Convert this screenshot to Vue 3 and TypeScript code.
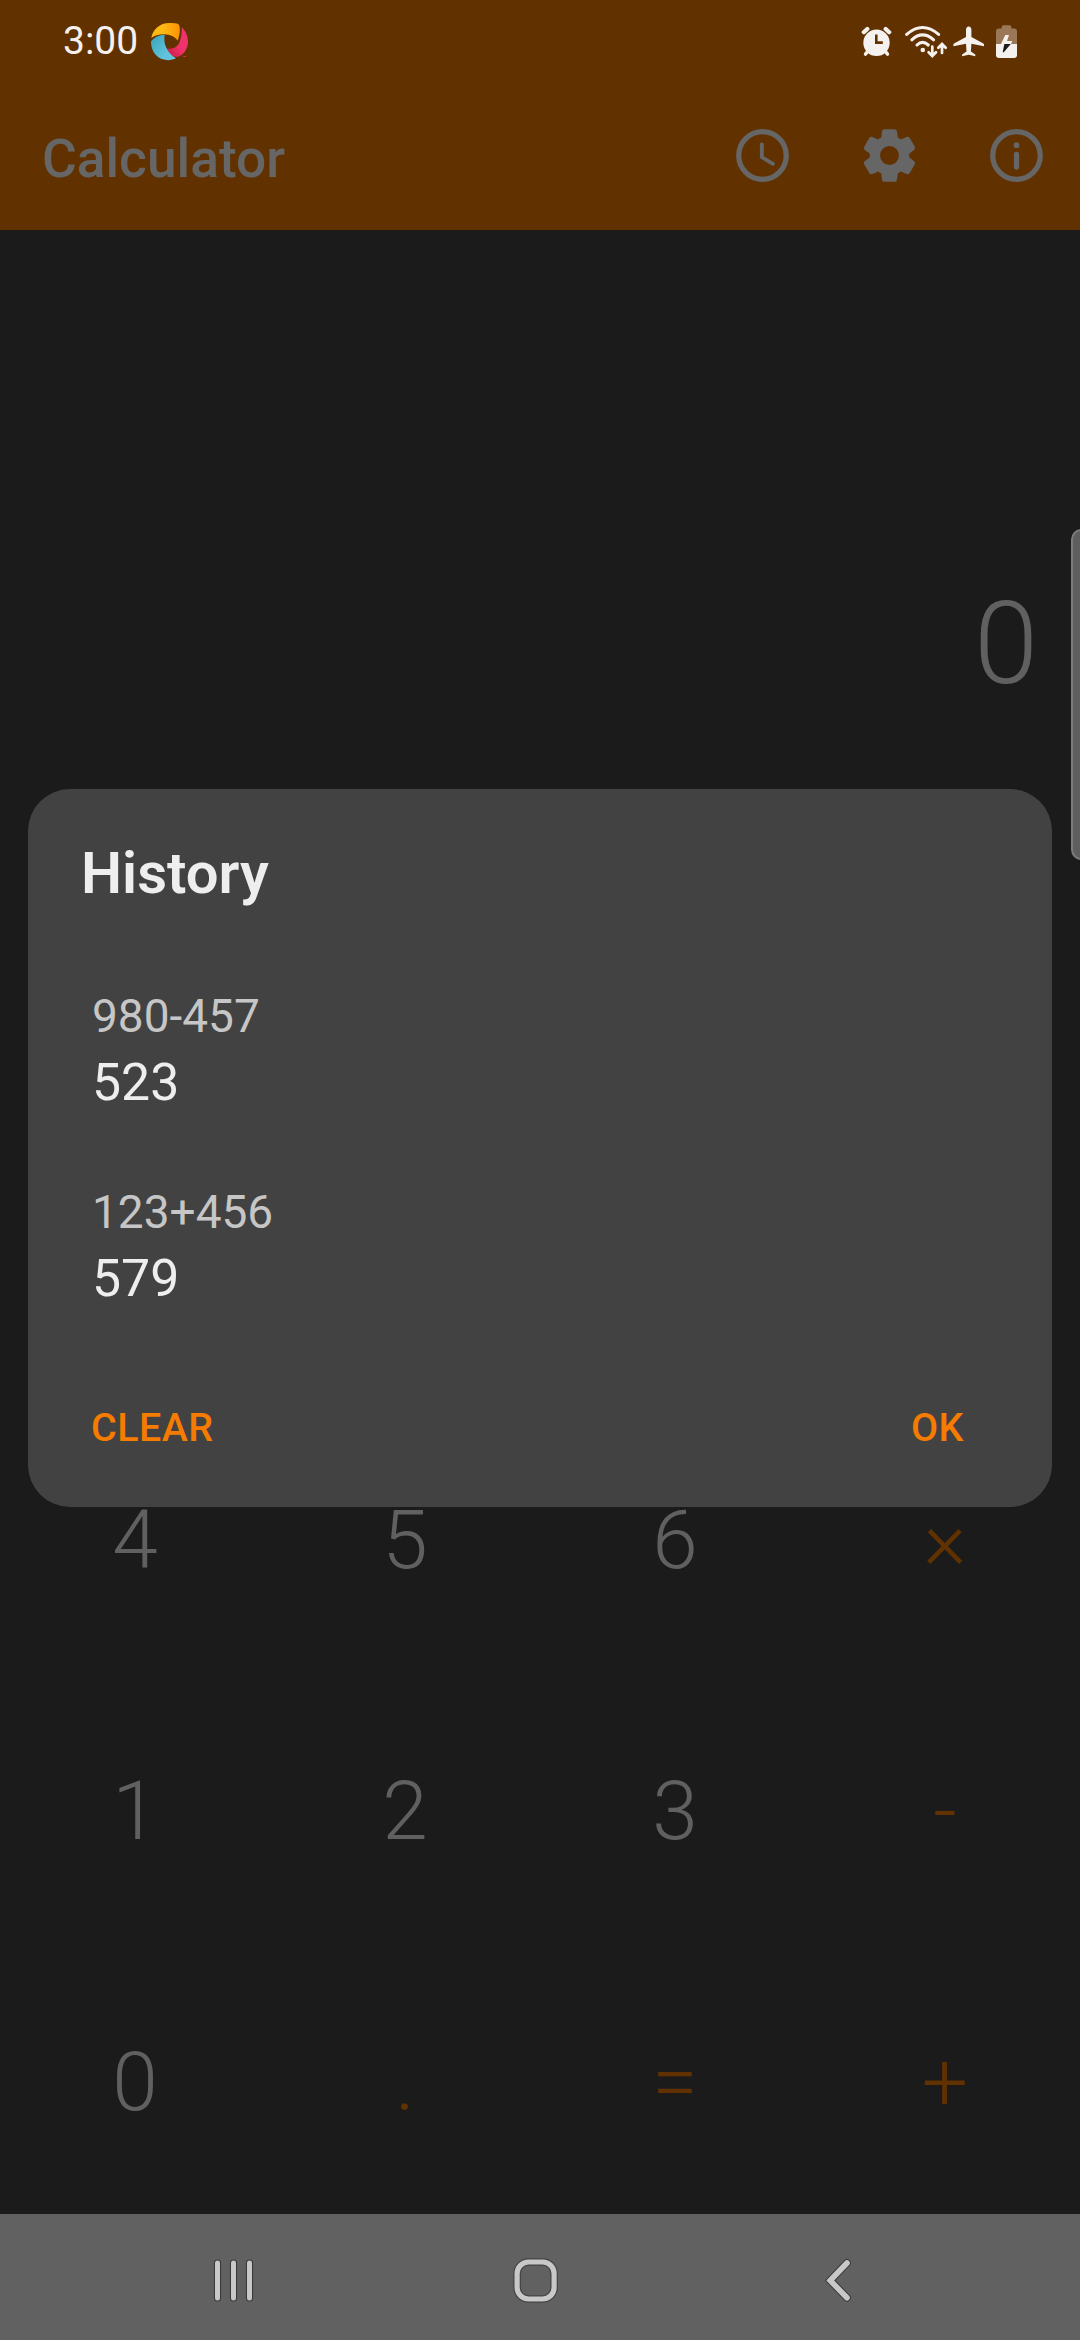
<script setup lang="ts">
interface Key {
  label: string
  accent?: boolean
}

interface HistoryEntry {
  expression: string
  result: string
}

const display = '0'

const keys: Key[] = [
  { label: '4' },
  { label: '5' },
  { label: '6' },
  { label: '×', accent: true },
  { label: '1' },
  { label: '2' },
  { label: '3' },
  { label: '-', accent: true },
  { label: '0' },
  { label: '.', accent: true },
  { label: '=', accent: true },
  { label: '+', accent: true },
]

const history: HistoryEntry[] = [
  { expression: '980-457', result: '523' },
  { expression: '123+456', result: '579' },
]
</script>

<template>
  <div class="screen">
    <header class="top">
      <div class="status">
        <span class="time">3:00</span>
        <svg class="logo" viewBox="330 66 120 120" width="40" height="40">
          <defs>
            <linearGradient id="warm" x1="0" x2="1">
              <stop offset="0.4" stop-color="#fdb913" />
              <stop offset="1" stop-color="#fb9205" />
            </linearGradient>
            <linearGradient id="pink" x1="0" y1="1" x2="0.8" y2="0.2">
              <stop offset="0" stop-color="#c4123f" />
              <stop offset="0.6" stop-color="#f0326b" />
            </linearGradient>
            <linearGradient id="sky" x1="0" x2="1" y2="1">
              <stop offset="0.2" stop-color="#43adc6" />
              <stop offset="0.7" stop-color="#62c4dc" />
            </linearGradient>
          </defs>
          <path fill="url(#warm)" d="M334 114C338 88 360 69 388 69Q402 68 414 71C422 78 421 100 413 122C406 110 390 104 372 103C356 103 344 107 334 114Z" />
          <path fill="url(#pink)" d="M425 82C438 93 445 112 444 130C441 152 428 167 412 171C397 170 384 160 377 146C396 148 411 143 418 128C424 115 426 98 425 82Z" />
          <path fill="url(#sky)" d="M374 104C370 128 377 155 408 175C398 181 380 182 368 178C346 171 333 150 333 124C343 111 358 105 374 104Z" />
          <path fill="#e0204f" d="M430 168h8v3h-8z" />
        </svg>
        <div class="status-icons">
          <svg viewBox="861 26 31 32" width="31" height="32">
            <g stroke="#f5f1ee" stroke-linecap="round" fill="none">
              <path stroke-width="4.2" d="M863.8 32.2L867.3 29M889.2 32.2L885.7 29" />
              <path stroke-width="3.6" d="M868 51l-2.4 3M885 51l2.4 3" />
            </g>
            <circle cx="876.5" cy="42.8" r="13.2" fill="#f5f1ee" />
            <path d="M876.3 34.5V42.6H882.8" fill="none" stroke="#613200" stroke-width="2.6" />
          </svg>
          <svg viewBox="904 24 44 35" width="44" height="35">
            <g stroke="#f5f1ee" fill="none" stroke-linecap="round" stroke-width="3.1">
              <path d="M906.7 34.4Q922.5 20.6 938.6 34.4" />
              <path d="M911.8 39.8Q922.5 30 933.6 39.8" />
              <path d="M917 45Q922.5 39.6 928.3 45" />
              <path stroke-width="2.7" d="M932.3 46.5V55M928.6 52.3L932.3 56L936 52.3M942 53V44.5M938.3 47.7L942 44L945.7 47.7" />
            </g>
            <circle cx="922.8" cy="50" r="2.3" fill="#f5f1ee" />
          </svg>
          <svg viewBox="953 26 32 31" width="32" height="31">
            <path fill="#f5f1ee" d="M968.7 26.6C970.4 26.6 971.4 28 971.4 30V37L983.4 43.6Q984.4 44.4 984 46.3L971.4 43.8L970.9 51.4L975.3 54.6V56.3L968.7 54.7L962.1 56.3V54.6L966.5 51.4L966 43.8L953.4 46.3Q953 44.4 954 43.6L966 37V30C966 28 967 26.6 968.7 26.6Z" />
          </svg>
          <svg viewBox="996 25 21 33" width="21" height="33">
            <path fill="#997757" d="M1001.7 28V27Q1001.7 25.3 1003.4 25.3H1009.7Q1011.3 25.3 1011.3 27V28.6H1014Q1017 28.6 1017 31.6V44H996V31.6Q996 28.6 999 28.6H1001.7Z" />
            <path fill="#f5f1ee" d="M996 44H1017V55Q1017 58 1014 58H999Q996 58 996 55Z" />
            <path fill="#f5f1ee" d="M1005.3 35H1009L1007 41H1012.3L1011 44H1001Z" />
            <path fill="#1b1b1b" d="M1004.3 44H1010.8L1003.8 52.3H1002.7Z" />
          </svg>
        </div>
      </div>
      <div class="toolbar">
        <h1 class="title">Calculator</h1>
        <nav class="actions">
          <svg viewBox="0 0 24 24" width="63" height="63">
            <circle cx="12" cy="12" r="9.05" fill="none" stroke="#666" stroke-width="2" />
            <path fill="#666" d="M11.78 7h-.06c-.4 0-.72.32-.72.72v4.72c0 .35.18.68.49.86l4.15 2.49c.34.2.78.1.98-.24.21-.34.1-.79-.25-.99l-3.87-2.3V7.72c0-.4-.32-.72-.72-.72z" />
          </svg>
          <svg viewBox="0 0 24 24" width="63" height="63">
            <path fill="#666" fill-rule="evenodd" d="M19.5 12c0-.23-.01-.45-.03-.68l1.86-1.41c.4-.3.51-.86.26-1.3l-1.87-3.23c-.25-.44-.79-.62-1.25-.42l-2.15.91c-.37-.26-.76-.49-1.17-.68l-.29-2.31C14.8 2.38 14.37 2 13.87 2h-3.73C9.63 2 9.2 2.38 9.14 2.88L8.85 5.19c-.41.19-.8.42-1.17.68L5.53 4.96c-.46-.2-1-.02-1.25.42L2.41 8.62c-.25.44-.14.99.26 1.3l1.86 1.41C4.51 11.55 4.5 11.77 4.5 12s.01.45.03.68l-1.86 1.41c-.4.3-.51.86-.26 1.3l1.87 3.23c.25.44.79.62 1.25.42l2.15-.91c.37.26.76.49 1.17.68l.29 2.31C9.2 21.62 9.63 22 10.13 22h3.73c.5 0 .93-.38.99-.88l.29-2.31c.41-.19.8-.42 1.17-.68l2.15.91c.46.2 1 .02 1.25-.42l1.87-3.23c.25-.44.14-.99-.26-1.3l-1.86-1.41c.03-.23.04-.45.04-.68zM12 15.6a3.6 3.6 0 1 1 0-7.2 3.6 3.6 0 0 1 0 7.2z" />
          </svg>
          <svg viewBox="0 0 24 24" width="63" height="63">
            <circle cx="12" cy="12" r="9.05" fill="none" stroke="#666" stroke-width="2" />
            <circle cx="12" cy="8.05" r="1.08" fill="#666" />
            <rect x="11" y="10.6" width="2" height="6.8" rx=".9" fill="#666" />
          </svg>
        </nav>
      </div>
    </header>

    <main class="body">
      <div class="display">{{ display }}</div>
      <div class="keypad">
        <button v-for="key in keys" :key="key.label" class="key" :class="{ accent: key.accent }">
          {{ key.label }}
        </button>
      </div>
    </main>

    <footer class="navbar">
      <svg viewBox="210 2254 48 54" width="48" height="54">
        <g fill="none" stroke-linecap="round">
          <path stroke="#3a3a3a" stroke-width="7.2" d="M217.5 2263V2298M233.5 2263V2298M249.5 2263V2298" />
          <path stroke="#c8c8c8" stroke-width="5" d="M217.5 2263V2298M233.5 2263V2298M249.5 2263V2298" />
        </g>
      </svg>
      <svg viewBox="508 2254 54 54" width="54" height="54">
        <rect x="517.1" y="2262" width="37" height="37" rx="11.5" fill="none" stroke="#444" stroke-width="7.6" />
        <rect x="517.1" y="2262" width="37" height="37" rx="11.5" fill="none" stroke="#c8c8c8" stroke-width="5.2" />
      </svg>
      <svg viewBox="820 2254 36 54" width="36" height="54">
        <path fill="none" stroke="#3e3e3e" stroke-width="7.8" stroke-linecap="round" d="M847 2263L830.2 2280.5L847 2297.8" />
        <path fill="none" stroke="#c8c8c8" stroke-width="5.6" stroke-linecap="round" d="M847 2263L830.2 2280.5L847 2297.8" />
      </svg>
    </footer>

    <div class="edge-handle"></div>

    <div class="overlay">
      <section class="dialog">
        <h2 class="dialog-title">History</h2>
        <ul class="entries">
          <li v-for="entry in history" :key="entry.expression">
            <div class="expression">{{ entry.expression }}</div>
            <div class="result">{{ entry.result }}</div>
          </li>
        </ul>
        <div class="dialog-actions">
          <button>CLEAR</button>
          <button>OK</button>
        </div>
      </section>
    </div>
  </div>
</template>

<style>
body {
  margin: 0;
  background: #1b1b1b;
}
</style>

<style scoped>
.screen {
  position: relative;
  display: flex;
  flex-direction: column;
  width: 1080px;
  height: 2340px;
  overflow: hidden;
  background: #1b1b1b;
  font-family: Roboto, sans-serif;
}

svg {
  display: block;
  flex: none;
}

button {
  padding: 0;
  border: 0;
  background: none;
  font-family: inherit;
}

.top {
  flex: none;
  height: 230px;
  background: #613200;
}

.status {
  display: flex;
  height: 80px;
  box-sizing: border-box;
  padding: 0 63px 0 63px;
}

.time {
  width: 87px;
  padding-top: 17px;
  font-size: 39px;
  line-height: 48px;
  color: #f5f1ee;
}

.logo {
  margin-top: 22px;
}

.status-icons {
  display: flex;
  align-items: flex-start;
  margin-left: auto;
  gap: 11px;
}

.status-icons svg:nth-child(1) {
  margin: 26px 1px 0 0;
}

.status-icons svg:nth-child(2) {
  margin: 24px -6px 0 0;
}

.status-icons svg:nth-child(3) {
  margin-top: 26px;
}

.status-icons svg:nth-child(4) {
  margin-top: 25px;
}

.toolbar {
  display: flex;
  justify-content: space-between;
  padding: 44px 32px 0 42px;
}

.title {
  margin: 3px 0 0;
  font-size: 53.3px;
  font-weight: 500;
  line-height: 64px;
  color: #666;
}

.actions {
  display: flex;
  gap: 64px;
}

.body {
  display: flex;
  flex: 1;
  flex-direction: column;
}

.display {
  flex: 1;
  padding: 344px 42px 0 0;
  font-size: 115.5px;
  font-weight: 300;
  line-height: 140px;
  text-align: right;
  color: #606060;
}

.keypad {
  display: grid;
  flex: none;
  grid-template-columns: repeat(4, 270px);
  grid-auto-rows: 271px;
}

.key {
  padding-top: 7px;
  font-size: 82px;
  font-weight: 300;
  color: #606060;
}

.key.accent {
  color: #613200;
}

.navbar {
  display: flex;
  flex: none;
  align-items: flex-start;
  height: 126px;
  box-sizing: border-box;
  padding: 40px 0 0 210px;
  background: #616161;
}

.navbar svg:nth-child(2) {
  margin-left: 250px;
}

.navbar svg:nth-child(3) {
  margin-left: 258px;
}

.edge-handle {
  position: absolute;
  top: 529px;
  right: -12px;
  width: 21px;
  height: 331px;
  box-sizing: border-box;
  border: 2px solid #7b7b7b;
  border-radius: 11px;
  background: #5e5e5e;
}

.overlay {
  position: absolute;
  inset: 0;
  padding: 789px 28px 0;
}

.dialog {
  display: flex;
  flex-direction: column;
  height: 718px;
  box-sizing: border-box;
  padding: 50px 88px 0 64px;
  border-radius: 42px;
  background: #424242;
}

.dialog-title {
  margin: 0 0 82px -11px;
  font-size: 58px;
  font-weight: 600;
  line-height: 68px;
  color: #eee;
}

.entries {
  display: flex;
  flex-direction: column;
  gap: 71px;
  margin: 0 0 94px;
  padding: 0;
  list-style: none;
}

.expression {
  font-size: 46px;
  line-height: 54px;
  color: #c6c6c6;
}

.result {
  margin-top: 9px;
  font-size: 51.8px;
  line-height: 62px;
  color: #eee;
}

.dialog-actions {
  display: flex;
  justify-content: space-between;
  margin-left: -1px;
}

.dialog-actions button {
  font-size: 39.4px;
  font-weight: 500;
  line-height: 48px;
  letter-spacing: 0.5px;
  color: #f57c00;
}
</style>
